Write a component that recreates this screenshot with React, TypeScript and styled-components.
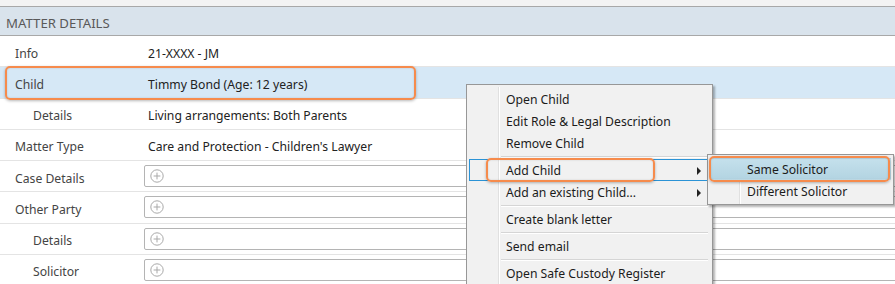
import React from 'react';
import styled, { createGlobalStyle } from 'styled-components';

const GlobalStyle = createGlobalStyle`
  html, body {
    margin: 0;
    padding: 0;
    background: #ffffff;
  }
  body {
    font-family: "Segoe UI", "Noto Sans", "Open Sans", sans-serif;
    font-size: 12.2px;
    color: #2b2b2b;
  }
`;

const Page = styled.div`
  position: relative;
  width: 895px;
  height: 284px;
  overflow: hidden;
  background: #ffffff;
`;

const TopStrip = styled.div`
  height: 6px;
  background: #f3f3f3;
  border-bottom: 1px solid #a8a8a8;
`;

const Header = styled.div`
  height: 29px;
  box-sizing: border-box;
  display: flex;
  align-items: center;
  padding: 3px 0 0 6px;
  background: #d9e3ec;
  border-bottom: 1px solid #a8a8a8;
  color: #595959;
  font-size: 13.2px;
`;

const Row = styled.div<{ $selected?: boolean }>`
  position: relative;
  display: grid;
  grid-template-columns: 144px 1fr;
  align-items: center;
  height: 30.25px;
  border-bottom: 1px solid #e4e4e4;
  background: ${({ $selected }) => ($selected ? '#d6e8f6' : '#ffffff')};
`;

const Label = styled.div<{ $indent?: boolean }>`
  padding: 4px 0 0 ${({ $indent }) => ($indent ? '33px' : '15px')};
  color: #444;
`;

const Value = styled.div`
  padding: 4px 0 0 4px;
  color: #222;
`;

const Field = styled.div`
  height: 20px;
  margin-right: -6px;
  border: 1px solid #b4b4b4;
  border-radius: 2px;
  display: flex;
  align-items: center;
  padding-left: 5px;
`;

const Callout = styled.div<{ $left: number; $top: number; $width: number; $height: number }>`
  position: absolute;
  left: ${({ $left }) => $left}px;
  top: ${({ $top }) => $top}px;
  width: ${({ $width }) => $width}px;
  height: ${({ $height }) => $height}px;
  box-sizing: border-box;
  border: 2px solid #f68b4c;
  border-radius: 5px;
  box-shadow: 0 1px 3px rgba(0, 0, 0, 0.28), inset 0 0 2px rgba(0, 0, 0, 0.15);
  pointer-events: none;
  z-index: 5;
`;

const Menu = styled.div<{ $left: number; $top: number; $width: number }>`
  position: absolute;
  left: ${({ $left }) => $left}px;
  top: ${({ $top }) => $top}px;
  width: ${({ $width }) => $width}px;
  box-sizing: border-box;
  background: #f1f1f1;
  border: 1px solid #979797;
  box-shadow: 2px 2px 2px rgba(0, 0, 0, 0.3);
  padding: 3px 2px 2px;
  z-index: 3;

  &::before {
    content: '';
    position: absolute;
    left: 31px;
    top: 2px;
    bottom: 0;
    width: 1px;
    background: #e0e0e0;
    box-shadow: 1px 0 0 #ffffff;
  }
`;

const Item = styled.div<{ $hover?: boolean; $picked?: boolean }>`
  position: relative;
  display: flex;
  align-items: center;
  justify-content: space-between;
  height: 22px;
  box-sizing: border-box;
  padding: 1px 8px 0 36px;
  color: #1b1b1b;
  border: 1px solid ${({ $hover }) => ($hover ? '#2b93d6' : 'transparent')};
  background: ${({ $picked }) =>
    $picked ? 'linear-gradient(#c4e0ec, #b3d4e2)' : 'transparent'};
  z-index: 1;
`;

const Arrow = styled.span`
  width: 0;
  height: 0;
  border-top: 4px solid transparent;
  border-bottom: 4px solid transparent;
  border-left: 4px solid #222;
`;

const Separator = styled.div`
  height: 1px;
  margin: 2px 2px 1px 32px;
  background: #d5d5d5;
  border-bottom: 1px solid #ffffff;
`;

const PlusIcon: React.FC = () => (
  <svg width="14" height="14" viewBox="0 0 14 14">
    <circle cx="7" cy="7" r="6.2" fill="none" stroke="#a9a9a9" strokeWidth="1" />
    <path d="M7 3.6v6.8M3.6 7h6.8" stroke="#a9a9a9" strokeWidth="1" />
  </svg>
);

type RowData = { label: string; value?: string; indent?: boolean; field?: boolean; selected?: boolean };

const rows: RowData[] = [
  { label: 'Info', value: '21-XXXX - JM' },
  { label: 'Child', value: 'Timmy Bond (Age: 12 years)', selected: true },
  { label: 'Details', value: 'Living arrangements: Both Parents', indent: true },
  { label: 'Matter Type', value: "Care and Protection - Children's Lawyer" },
  { label: 'Case Details', field: true },
  { label: 'Other Party', field: true },
  { label: 'Details', field: true, indent: true },
  { label: 'Solicitor', field: true, indent: true },
];

const App: React.FC = () => {
  return (
    <Page>
      <GlobalStyle />
      <TopStrip />
      <Header>MATTER DETAILS</Header>
      {rows.map((r, i) => (
        <Row key={i} $selected={r.selected}>
          <Label $indent={r.indent}>{r.label}</Label>
          {r.field ? (
            <Field>
              <PlusIcon />
            </Field>
          ) : (
            <Value>{r.value}</Value>
          )}
          {r.selected && <Callout $left={5} $top={-1} $width={411} $height={34} />}
        </Row>
      ))}

      <Menu $left={466} $top={84} $width={247}>
        <Item>Open Child</Item>
        <Item>Edit Role &amp; Legal Description</Item>
        <Item>Remove Child</Item>
        <Separator />
        <Item $hover>
          Add Child
          <Arrow />
        </Item>
        <Item>
          Add an existing Child...
          <Arrow />
        </Item>
        <Separator />
        <Item>Create blank letter</Item>
        <Separator />
        <Item>Send email</Item>
        <Separator />
        <Item>Open Safe Custody Register</Item>
      </Menu>
      <Callout $left={486} $top={158} $width={169} $height={24} />

      <Menu $left={707} $top={154} $width={187}>
        <Item $picked>Same Solicitor</Item>
        <Item>Different Solicitor</Item>
      </Menu>
      <Callout $left={709} $top={156} $width={181} $height={26} />
    </Page>
  );
};

export default App;
